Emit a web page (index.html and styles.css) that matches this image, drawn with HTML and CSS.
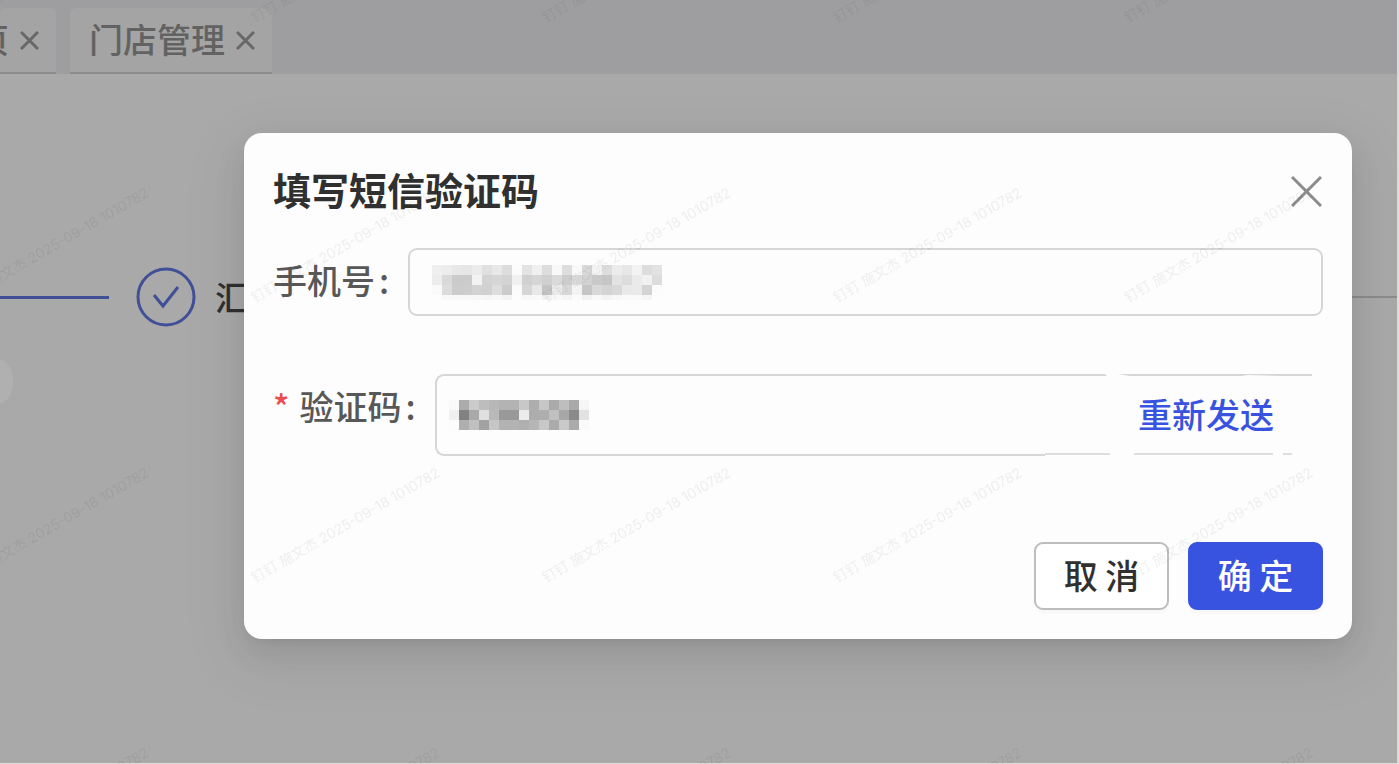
FILE: index.html
```html
<!DOCTYPE html>
<html lang="zh-CN">
<head>
  <meta charset="UTF-8">
  <meta name="viewport" content="width=device-width, initial-scale=1.0">
  <title>门店管理</title>
  <link rel="stylesheet" href="styles.css">
</head>
<body>
  <div class="page">
    <nav class="tabs">
      <div class="tab tab-first">
        <a href="#">页</a>
        <button class="tab-close" aria-label="关闭">
          <svg width="19" height="19" viewBox="0 0 19 19"><path d="M1 1L18 18M18 1L1 18"/></svg>
        </button>
      </div>
      <div class="tab">
        <a href="#">门店管理</a>
        <button class="tab-close" aria-label="关闭">
          <svg width="19" height="19" viewBox="0 0 19 19"><path d="M1 1L18 18M18 1L1 18"/></svg>
        </button>
      </div>
    </nav>
    <main>
      <div class="steps">
        <span class="step-line done"></span>
        <svg class="step-icon" width="60" height="60" viewBox="0 0 60 60">
          <circle cx="30" cy="30" r="28"/>
          <path d="M18 28L27 39L42 20"/>
        </svg>
        <span class="step-title">汇</span>
        <span class="step-line"></span>
      </div>
      <div class="bubble"></div>
    </main>
  </div>

  <div class="mask">
    <form class="modal" role="dialog" aria-labelledby="modal-title">
      <div class="modal-header">
        <h1 id="modal-title">填写短信验证码</h1>
        <button type="button" class="modal-close" aria-label="关闭">
          <svg width="31" height="31" viewBox="0 0 31 31"><path d="M1 1L30 30M30 1L1 30"/></svg>
        </button>
      </div>
      <div class="row">
        <label for="phone">手机号<span class="colon">:</span></label>
        <div class="field">
          <svg class="mosaic" id="phone-mosaic" width="230" height="35" shape-rendering="crispEdges"></svg>
          <input type="text" id="phone" readonly>
        </div>
      </div>
      <div class="row row-code">
        <label for="code"><span class="required">*</span>验证码<span class="colon">:</span></label>
        <div class="field field-code">
          <svg class="mosaic" id="code-mosaic" width="140" height="30" shape-rendering="crispEdges"></svg>
          <input type="text" id="code">
        </div>
        <div class="resend">
          <svg class="resend-lines" width="278" height="82" viewBox="0 0 278 82">
            <path d="M0 0H60L62 2H0ZM73 0H267V2H237L203 1L197 2H85Z"/>
            <path d="M0 79H65V81H0ZM89 79H228V81H89ZM238 79H247V81H238Z" opacity=".8"/>
          </svg>
          <button type="button">重新发送</button>
        </div>
      </div>
      <div class="modal-footer">
        <button type="button" class="btn">取 消</button>
        <button type="submit" class="btn btn-primary">确 定</button>
      </div>
    </form>
  </div>

  <svg class="watermark" width="100%" height="100%" aria-hidden="true">
    <defs>
      <pattern id="wm" x="-41" y="-138" width="291" height="280" patternUnits="userSpaceOnUse">
        <text x="5" y="161" transform="rotate(-30 5 161)">钉钉 施文杰 2025-09-18 1010782</text>
      </pattern>
    </defs>
    <rect width="100%" height="100%" fill="url(#wm)"/>
  </svg>

  <script>
    // Grey levels of the masked values, one hex pair per 10px block
    const phoneRows = [
      "ef ec e8 e6 ec e0 e8 dc fb e3 f0 dd f8 dd f9 d9 f3 dd ec e7 f3 dd e2",
      "ec d9 cb cb f3 d3 d6 d3 f0 d1 d6 d0 da cc dd d2 c9 c6 e3 dd ea f1 dd",
      "fa dc cc cd d3 d1 dd cc fb d6 e8 c4 ea d8 f3 c6 d9 d4 d9 e9 ea d4 fc",
      "fd f8 f8 f8 f7 f5 f8 f3 fd f8 f9 f2 f9 f5 fb f2 f9 f3 f8 fa fa f6 fd"
    ];
    const codeRows = [
      "f9 ab cb bd b7 b3 b3 c8 ae c6 aa be a9 f6",
      "f0 82 a9 e0 b9 99 99 ec ad ae c0 a7 8a e2",
      "fc af c0 a2 c6 b3 b3 b0 b6 c8 ab ca ab fa"
    ];

    function drawMosaic(id, rows) {
      let rects = "";
      rows.forEach(function(row, y) {
        row.split(" ").forEach(function(c, x) {
          rects += `<rect x="${x * 10}" y="${y * 10}" width="10" height="10" fill="#${c}${c}${c}"/>`;
        });
      });
      document.getElementById(id).innerHTML = rects;
    }

    drawMosaic("phone-mosaic", phoneRows);
    drawMosaic("code-mosaic", codeRows);
  </script>
</body>
</html>
```
FILE: styles.css
```css
* {
  box-sizing: border-box;
}
html, body {
  margin: 0;
  height: 100%;
}
body {
  font-family: "Noto Sans CJK SC", sans-serif;
  font-size: 34px;
  font-weight: 500;
  color: #303030;
  background: #dcdcda;
  display: flex;
  overflow: hidden;
}
button, input {
  font: inherit;
  color: inherit;
  border: none;
  background: none;
  padding: 0;
}
button {
  cursor: pointer;
}
svg {
  display: block;
  fill: none;
  flex-shrink: 0;
}
.page {
  flex: 1;
  margin: 0 2px 1px 0;
  background: #a9a9a9;
}
/* Tabs */
.tabs {
  display: flex;
  gap: 14px;
  padding-top: 8px;
  background: #9e9ea0;
}
.tab {
  display: flex;
  align-items: center;
  gap: 11px;
  height: 66px;
  padding: 0 17px 0 19px;
  background: #a4a4a5;
  border-bottom: 2px solid #8c8c8c;
  border-radius: 6px 6px 0 0;
  color: #626262;
}
.tab-first {
  width: 56px;
  padding-left: 0;
  justify-content: flex-end;
}
.tab a {
  padding-bottom: 4px;
  color: inherit;
  text-decoration: none;
  white-space: nowrap;
}
.tab-close {
  stroke: #686868;
  stroke-width: 3;
}
/* Steps */
.steps {
  display: flex;
  align-items: center;
  padding-top: 193px;
}
.step-line {
  flex: 1;
  height: 2px;
  background: #8c8c8c;
}
.step-line.done {
  flex: none;
  width: 109px;
  height: 3px;
  background: #414f96;
}
.step-icon {
  margin: 0 19px 0 27px;
  stroke: #414f96;
  stroke-width: 3;
}
.step-title {
  margin-right: 20px;
  line-height: 60px;
}
.bubble {
  width: 13px;
  height: 43px;
  margin-top: 33px;
  background: #b0b0b0;
  border-radius: 0 13px 13px 0 / 0 22px 22px 0;
}
/* Modal */
.mask {
  position: absolute;
  inset: 0;
  padding: 133px 47px 0 244px;
}
.modal {
  padding: 29px 29px 29px 29px;
  background: #fdfdfd;
  border-radius: 18px;
  box-shadow: 0 12px 32px rgba(0,0,0,0.08), 0 6px 12px -8px rgba(0,0,0,0.12), 0 18px 56px 16px rgba(0,0,0,0.05);
}
.modal-header {
  display: flex;
  align-items: center;
  justify-content: space-between;
  margin-bottom: 28px;
}
.modal-header h1 {
  margin: 0;
  padding-bottom: 4px;
  font-size: 38px;
  line-height: 54px;
  font-weight: bold;
}
.modal-close {
  margin-right: 1px;
  stroke: #8c8c8c;
  stroke-width: 3;
}
.row {
  display: flex;
  margin-bottom: 58px;
}
.row label {
  line-height: 64px;
  color: #585858;
  white-space: nowrap;
}
.colon {
  margin: 0 19px 0 4px;
}
.required {
  margin-right: 10px;
  color: #e8504f;
}
.field {
  flex: 1;
  display: flex;
  align-items: center;
  height: 68px;
  padding-left: 22px;
  border: 2px solid #d6d6d6;
  border-radius: 9px;
}
.field input {
  flex: 1;
  min-width: 0;
  height: 100%;
  outline: none;
}
.row-code {
  margin-bottom: 86px;
}
.field-code {
  height: 82px;
  padding-left: 12px;
  border-right: none;
  border-radius: 9px 0 0 9px;
}
.resend {
  position: relative;
  width: 278px;
  padding-left: 93px;
  display: flex;
  align-items: center;
}
.resend-lines {
  position: absolute;
  top: 0;
  left: 0;
  fill: #d6d6d6;
}
.resend button {
  padding-bottom: 4px;
  color: #3853e0;
}
.modal-footer {
  display: flex;
  justify-content: flex-end;
  gap: 19px;
}
.btn {
  width: 135px;
  height: 68px;
  padding-bottom: 4px;
  border: 2px solid #bdbdbd;
  border-radius: 9px;
  background: #fff;
  box-shadow: 0 4px 2px rgba(0,0,0,0.02);
}
.btn-primary {
  color: #fff;
  background: #3853e0;
  border-color: #3853e0;
}
/* Watermark */
.watermark {
  position: absolute;
  inset: 0;
  pointer-events: none;
}
.watermark text {
  font-family: Inter, "Noto Sans CJK SC", sans-serif;
  font-size: 14px;
  font-weight: 400;
  fill: rgba(0,0,0,0.06);
}
```
